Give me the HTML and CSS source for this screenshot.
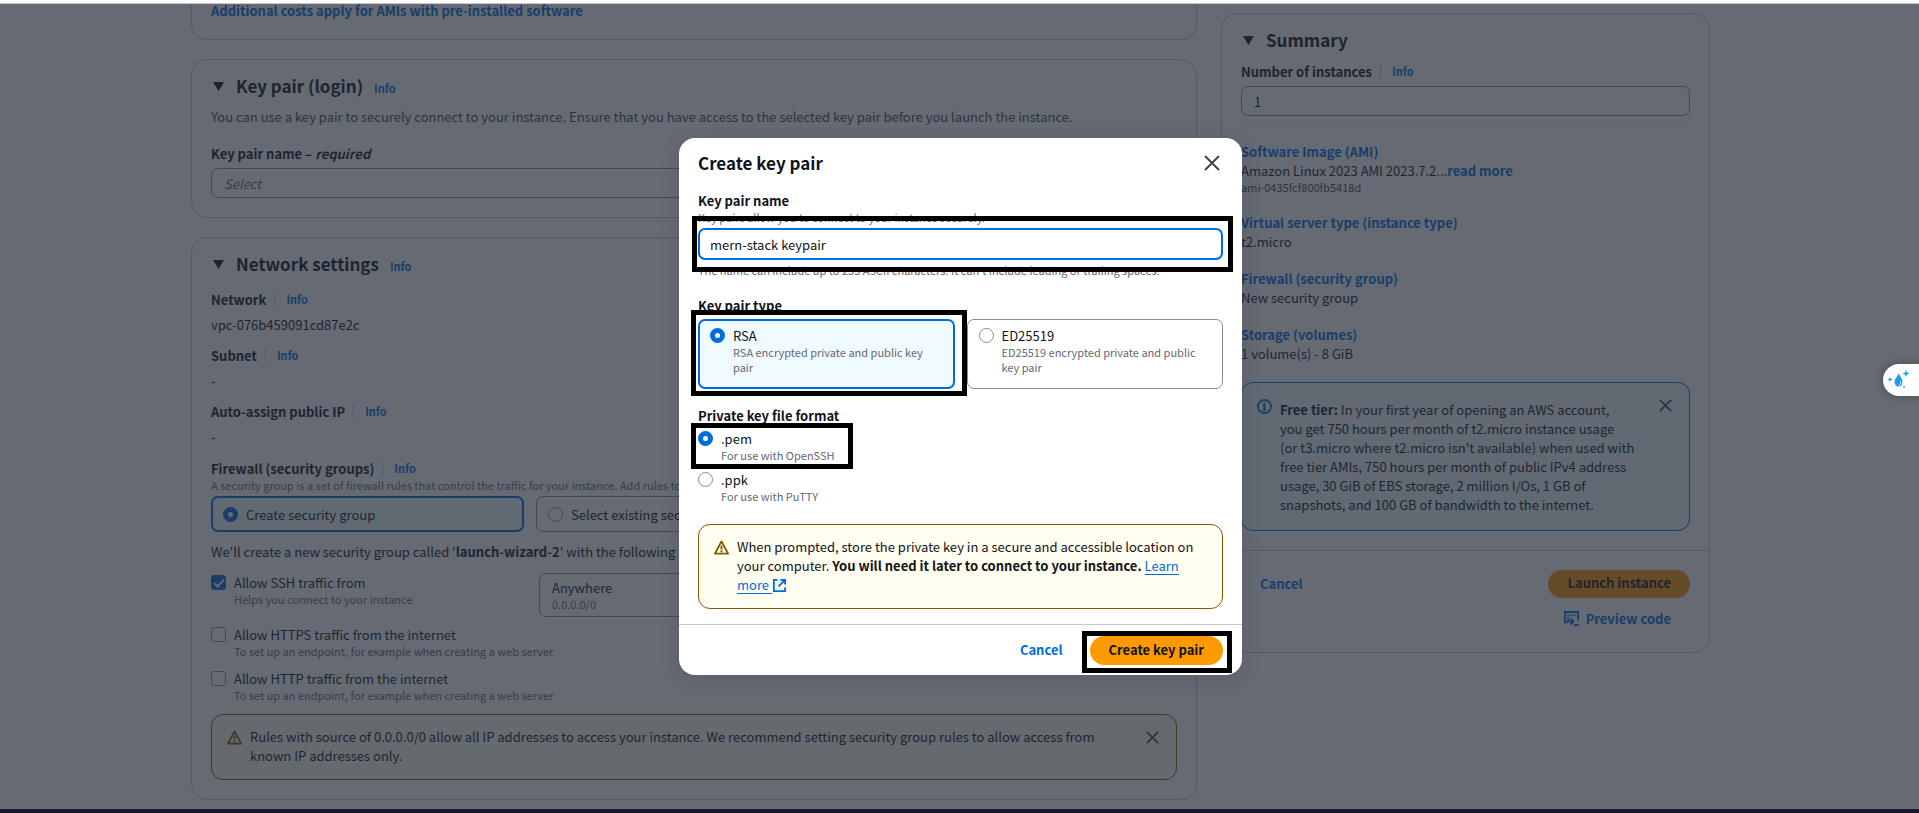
FILE: index.html
```
<!DOCTYPE html>
<html lang="en">
<head>
<meta charset="utf-8">
<title>Launch an instance</title>
<link rel="stylesheet" href="styles.css">
</head>
<body>
<div class="top-strip"></div>
<div class="viewport">
  <main class="page">
    <div class="column">
      <section class="card card-cut">
        <a class="link" href="#">Additional costs apply for AMIs with pre-installed software</a>
      </section>

      <section class="card">
        <h2 class="card-title"><svg class="caret" viewBox="0 0 11 9"><path d="M0 0h11L5.500 9z"/></svg>Key pair (login)<a class="info" href="#">Info</a></h2>
        <p class="intro">You can use a key pair to securely connect to your instance. Ensure that you have access to the selected key pair before you launch the instance.</p>
        <label class="label key-label" for="key-select">Key pair name – <em>required</em></label>
        <select class="select" id="key-select"><option>Select</option></select>
      </section>

      <section class="card">
        <h2 class="card-title"><svg class="caret" viewBox="0 0 11 9"><path d="M0 0h11L5.500 9z"/></svg>Network settings<a class="info" href="#">Info</a></h2>
        <dl class="facts">
          <div class="fact"><dt class="label with-info">Network<a class="info" href="#">Info</a></dt><dd>vpc-076b459091cd87e2c</dd></div>
          <div class="fact"><dt class="label with-info">Subnet<a class="info" href="#">Info</a></dt><dd>-</dd></div>
          <div class="fact"><dt class="label with-info">Auto-assign public IP<a class="info" href="#">Info</a></dt><dd>-</dd></div>
        </dl>
        <div class="label with-info firewall-label">Firewall (security groups)<a class="info" href="#">Info</a></div>
        <p class="hint">A security group is a set of firewall rules that control the traffic for your instance. Add rules to allow specific traffic to reach your instance.</p>
        <div class="group-tiles">
          <label class="group-tile selected"><input class="radio" type="radio" name="group" checked>Create security group</label>
          <label class="group-tile"><input class="radio" type="radio" name="group">Select existing security group</label>
        </div>
        <p class="rules-intro">We'll create a new security group called '<b>launch-wizard-2</b>' with the following rules:</p>
        <div class="rules">
          <div class="rule-row">
            <label class="choice"><input class="check" type="checkbox" checked><span>Allow SSH traffic from<small class="hint">Helps you connect to your instance</small></span></label>
            <button class="source" type="button" aria-haspopup="listbox">Anywhere<small class="hint">0.0.0.0/0</small></button>
          </div>
          <label class="choice"><input class="check" type="checkbox"><span>Allow HTTPS traffic from the internet<small class="hint">To set up an endpoint, for example when creating a web server</small></span></label>
          <label class="choice"><input class="check" type="checkbox"><span>Allow HTTP traffic from the internet<small class="hint">To set up an endpoint, for example when creating a web server</small></span></label>
        </div>
        <div class="alert warning">
          <svg class="alert-icon" viewBox="0 0 16 16"><path d="M8 1.500 15 14.500H1z"/><path d="M8 6v4M8 11v2"/></svg>
          <p class="alert-text">Rules with source of 0.0.0.0/0 allow all IP addresses to access your instance. We recommend setting security group rules to allow access from known IP addresses only.</p>
          <button class="close small" type="button" aria-label="Dismiss"><svg viewBox="0 0 16 16"><path d="M1 1l14 14M15 1L1 15"/></svg></button>
        </div>
      </section>
    </div>

    <aside class="card summary">
      <div class="summary-body">
        <h2 class="card-title"><svg class="caret" viewBox="0 0 11 9"><path d="M0 0h11L5.500 9z"/></svg>Summary</h2>
        <div class="label with-info count-label"><label for="count">Number of instances</label><a class="info" href="#">Info</a></div>
        <input class="input" id="count" type="text" value="1">
        <hr class="rule">
        <ul class="summary-list">
          <li><a class="link" href="#">Software Image (AMI)</a><div>Amazon Linux 2023 AMI 2023.7.2...<a class="link" href="#">read more</a></div><div class="hint dark">ami-0435fcf800fb5418d</div></li>
          <li><a class="link" href="#">Virtual server type (instance type)</a><div>t2.micro</div></li>
          <li><a class="link" href="#">Firewall (security group)</a><div>New security group</div></li>
          <li><a class="link" href="#">Storage (volumes)</a><div>1 volume(s) - 8 GiB</div></li>
        </ul>
        <div class="alert notice">
          <svg class="alert-icon" viewBox="0 0 16 16"><circle cx="8" cy="8" r="7"/><path d="M8 11.500V7H6.500M6.500 11.500h3M8 4v2"/></svg>
          <p class="alert-text"><b>Free tier:</b> In your first year of opening an AWS account,<br>you get 750 hours per month of t2.micro instance usage<br>(or t3.micro where t2.micro isn't available) when used with free tier AMIs, 750 hours per month of public IPv4 address usage, 30 GiB of EBS storage, 2 million I/Os, 1 GB of snapshots, and 100 GB of bandwidth to the internet.</p>
          <button class="close small" type="button" aria-label="Dismiss"><svg viewBox="0 0 16 16"><path d="M1 1l14 14M15 1L1 15"/></svg></button>
        </div>
      </div>
      <div class="summary-footer">
        <div class="summary-actions">
          <button class="text-button" type="button">Cancel</button>
          <button class="primary launch" type="button">Launch instance</button>
        </div>
        <button class="text-button preview" type="button"><svg class="preview-icon" viewBox="0 0 16 16"><path d="M4 12H1V1h14v9"/><path d="M3.500 4.500h2M7 4.500h2M10.500 4.500h2"/><path d="M4.500 7v4H9M7 8l3 3-3 3.500"/><path d="M10.500 15H16"/></svg>Preview code</button>
      </div>
    </aside>
  </main>

  <div class="overlay">
    <form class="modal" role="dialog" aria-modal="true" aria-labelledby="modal-title">
      <div class="modal-body">
        <header class="modal-header">
          <h1 class="modal-title" id="modal-title">Create key pair</h1>
          <button class="close" type="button" aria-label="Close"><svg viewBox="0 0 16 16"><path d="M1 1l14 14M15 1L1 15"/></svg></button>
        </header>
        <label class="label" for="key-name">Key pair name</label>
        <p class="hint">Key pairs allow you to connect to your instance securely.</p>
        <div class="marked name-field">
          <input class="input focused" id="key-name" type="text" value="mern-stack keypair">
          <span class="mark mark-name"></span>
        </div>
        <p class="hint">The name can include up to 255 ASCII characters. It can't include leading or trailing spaces.</p>

        <div class="label type-label">Key pair type</div>
        <div class="type-tiles">
          <label class="type-tile selected marked"><input class="radio" type="radio" name="type" checked><span>RSA<small class="hint">RSA encrypted private and public key pair</small></span><span class="mark mark-type"></span></label>
          <label class="type-tile"><input class="radio" type="radio" name="type"><span>ED25519<small class="hint">ED25519 encrypted private and public key pair</small></span></label>
        </div>

        <div class="label format-label">Private key file format</div>
        <div class="formats">
          <label class="choice marked"><input class="radio" type="radio" name="format" checked><span>.pem<small class="hint">For use with OpenSSH</small></span><span class="mark mark-format"></span></label>
          <label class="choice"><input class="radio" type="radio" name="format"><span>.ppk<small class="hint">For use with PuTTY</small></span></label>
        </div>

        <div class="alert warning">
          <svg class="alert-icon" viewBox="0 0 16 16"><path d="M8 1.500 15 14.500H1z"/><path d="M8 6v4M8 11v2"/></svg>
          <p class="alert-text">When prompted, store the private key in a secure and accessible location on your computer. <b>You will need it later to connect to your instance.</b> <a class="plain-link" href="#">Learn more <svg class="external" viewBox="0 0 16 16"><path d="M6 2H2v12h12v-4"/><path d="M9 2h5v5M14 2 7 9"/></svg></a></p>
        </div>
      </div>
      <footer class="modal-footer">
        <button class="text-button" type="button">Cancel</button>
        <span class="marked"><button class="primary" type="submit">Create key pair</button><span class="mark mark-submit"></span></span>
      </footer>
    </form>
  </div>

  <button class="assistant" type="button" aria-label="Assistant">
    <svg viewBox="0 0 24 20"><path class="drop" d="M12.500 3c1 3 4 5.500 4 9a4 4.500 0 0 1-8 0c0-3.500 3.500-5.500 4-9z"/><path class="shine" d="M14.500 11.500c.800 1.500 0 3-1.500 3.500"/><path class="spark" d="M20 0l1 2.500 2.500 1-2.500 1L20 7l-1-2.500-2.500-1 2.500-1zM4 7l.800 1.800 1.800.700-1.800.800L4 12l-.800-1.700-1.800-.800 1.800-.700zM18 15.500l.500 1 1 .500-1 .500-.500 1-.500-1-1-.500 1-.500z"/></svg>
  </button>
</div>
<div class="bottom-strip"></div>
</body>
</html>
```
FILE: styles.css
```
:root {
  --text: #0f141a;
  --muted: #656871;
  --link: #006ce0;
  --line: #c6c6cd;
  --control: #8c8c94;
  --amber: #855900;
  --orange: #ff9900;
}

* { box-sizing: border-box; margin: 0; padding: 0; }

body {
  display: grid;
  grid-template-rows: 4px 1fr 4px;
  height: 100vh;
  background: #fff;
  color: var(--text);
  font: 13px/19px "Noto Sans CJK SC", "Open Sans", sans-serif;
}

button, input, select { font: inherit; color: inherit; }
button { border: 0; background: none; cursor: pointer; }
a { text-decoration: none; }
svg { fill: none; stroke: currentColor; }

.top-strip { border-bottom: 1px solid var(--line); }
.bottom-strip { background: #161a28; }
.viewport { position: relative; overflow: hidden; }

/* Page behind the dialog */
.page {
  display: grid;
  grid-template-columns: 1006fr 489fr;
  gap: 24px;
  align-items: start;
  padding: 0 209px 0 191px;
}
.column { display: grid; grid-template-columns: minmax(0, 1fr); gap: 19px; }

.card { padding: 14px 19px 19px; border: 1px solid var(--line); border-radius: 16px; background: #fff; }
.card-cut { padding: 0 19px 22px; border-top: 0; border-radius: 0 0 16px 16px; line-height: 13px; }
.card-title { display: flex; align-items: baseline; font-size: 17px; line-height: 24px; font-weight: bold; }
.caret { width: 11px; height: 9px; margin: 0 12px 0 2px; align-self: center; fill: currentColor; stroke: none; }
.link { color: var(--link); font-weight: bold; }
.info { margin-left: 11px; color: var(--link); font-size: 11px; line-height: 15px; font-weight: bold; }
.label { display: block; font-weight: bold; }
.with-info { display: flex; align-items: center; }
.with-info .info { padding-left: 11px; margin-left: 8px; border-left: 1px solid var(--line); }
.hint { display: block; color: var(--muted); font-size: 11px; line-height: 15px; }

.intro { margin-top: 9px; color: #424650; }
.key-label { margin: 18px 0 5px; }
.select, .input {
  display: block;
  width: 100%;
  height: 30px;
  padding: 0 12px;
  border: 1px solid var(--control);
  border-radius: 7px;
  background: #fff;
}
.select { appearance: none; color: var(--muted); font-style: italic; }

.facts { display: grid; gap: 12px; margin-top: 14px; }
.fact { display: grid; gap: 6px; }
.firewall-label { margin-top: 13px; }

.radio, .check {
  flex: none;
  width: 15px;
  height: 15px;
  appearance: none;
  border: 1px solid var(--control);
  background: #fff;
}
.radio { border-radius: 50%; }
.radio:checked { border: 5px solid var(--link); }
.check { border-radius: 3px; }
.check:checked { display: grid; place-items: center; border-color: var(--link); background: var(--link); }
.check:checked::after {
  content: "";
  width: 4px;
  height: 8px;
  margin-bottom: 2px;
  border: solid #fff;
  border-width: 0 2px 2px 0;
  transform: rotate(42deg);
}

.group-tiles { display: grid; grid-template-columns: 313px 313px; gap: 12px; margin-top: 3px; }
.group-tile, .type-tile {
  display: flex;
  gap: 8px;
  border: 1px solid var(--control);
  border-radius: 7px;
}
.group-tile { align-items: center; height: 36px; padding: 0 11px; }
.group-tile.selected { padding: 0 10px; }
.selected { border: 2px solid var(--link); background: #f0fbff; }
.rules-intro { margin-top: 10px; }
.rules { display: grid; gap: 10px; margin: 12px 0 11px; }
.rule-row { display: grid; grid-template-columns: 316px 313px; gap: 12px; height: 42px; }
.choice { display: flex; gap: 8px; }
.choice .radio, .choice .check { margin-top: 2px; }
.source { height: 44px; padding: 0 12px; border: 1px solid var(--control); border-radius: 7px; text-align: left; }

.alert { display: flex; gap: 8px; padding: 12px 15px 14px; border: 1px solid; border-radius: 12px; }
.warning { border-color: var(--amber); background: #fffef0; }
.notice { padding: 17px 15px 16px; border-color: var(--link); background: #f0fbff; }
.alert-icon { flex: none; width: 15px; height: 15px; margin-top: 3px; stroke-width: 2; stroke-linejoin: round; }
.warning .alert-icon { color: var(--amber); }
.notice .alert-icon { margin-top: -1px; color: var(--link); }
.alert-text { flex: 1; color: var(--text); }
.close { flex: none; display: block; width: 16px; height: 16px; color: #424650; }
.close svg { display: block; width: 100%; height: 100%; stroke-width: 2; }
.close.small { width: 13px; height: 13px; margin: 4px 2px 0 24px; }
.notice .close.small { margin: -1px 2px 0 8px; }

/* Summary */
.summary { margin-top: 9px; padding: 0; }
.summary-body { padding: 14px 19px 19px; }
.count-label { margin: 10px 0 5px; }
.rule { margin: 11px 0 14px; border: 0; border-top: 1px solid #ebebf0; }
.summary-list { display: grid; gap: 18px; margin-bottom: 19px; list-style: none; }
.dark { color: #424650; }
.summary-footer { display: grid; gap: 11px; padding: 19px 19px 24px; border-top: 1px solid var(--line); }
.summary-actions { display: flex; justify-content: space-between; }
.text-button { padding: 0 19px 2px; color: var(--link); font-weight: bold; }
.primary { display: block; height: 29px; padding: 0 19px 3px; border-radius: 15px; background: var(--orange); color: var(--text); font-weight: bold; }
.launch { height: 28px; }
.preview { display: flex; align-items: center; gap: 7px; justify-self: end; padding-bottom: 0; }
.preview-icon { width: 15px; height: 15px; stroke-width: 2; }

/* Dialog */
.overlay {
  position: absolute;
  inset: 0;
  display: grid;
  place-items: center;
  padding-left: 2px;
  background: rgba(35, 43, 55, 0.7);
}
.modal { width: 563px; border-radius: 16px; background: #fff; box-shadow: 0 4px 20px 1px rgba(0, 7, 22, 0.1); }
.modal-body { padding: 13px 19px 15px; }
.modal-header { display: flex; align-items: center; justify-content: space-between; margin-bottom: 16px; padding-right: 3px; }
.modal-title { font-size: 17px; line-height: 24px; }
.name-field { margin: 3px 0; }
.focused { height: 32px; padding: 0 10px; border: 2px solid var(--link); outline: 0; }
.type-label { margin: 18px 0 4px; }
.type-tiles { display: grid; grid-template-columns: 1fr 1fr; gap: 12px; }
.type-tile { min-height: 70px; padding: 6px 11px; }
.type-tile.selected { padding: 5px 10px; }
.type-tile .radio { margin-top: 2px; }
.format-label { margin: 17px 0 4px; }
.formats { display: grid; gap: 7px; margin-bottom: 20px; justify-items: start; }
.modal-footer { display: flex; align-items: center; justify-content: flex-end; gap: 8px; padding: 11px 19px 10px; border-top: 1px solid var(--line); }

.plain-link { color: var(--link); text-decoration: underline; text-underline-offset: 3px; }
.external { width: 15px; height: 15px; margin: -4px 0; stroke-width: 2; vertical-align: 1px; }

/* Black frames drawn over the dialog */
.marked { position: relative; }
.mark { position: absolute; border: 5px solid #000; pointer-events: none; }
.mark-name { inset: -12px -10px -12px -6px; }
.mark-type { inset: -11px -14px -9px -9px; }
.mark-format { inset: -6px auto -6px -7px; width: 162px; }
.mark-submit { inset: -5px -9px -8px -8px; }

.assistant {
  position: absolute;
  top: 360px;
  right: 0;
  width: 36px;
  height: 32px;
  padding-left: 3px;
  border-radius: 16px 0 0 16px;
  background: #fff;
  box-shadow: 0 0 8px rgba(0, 0, 0, 0.3);
}
.assistant svg { display: block; width: 24px; height: 20px; fill: #1d9bf0; stroke: none; }
.assistant .shine { fill: none; stroke: #fff; }
```
